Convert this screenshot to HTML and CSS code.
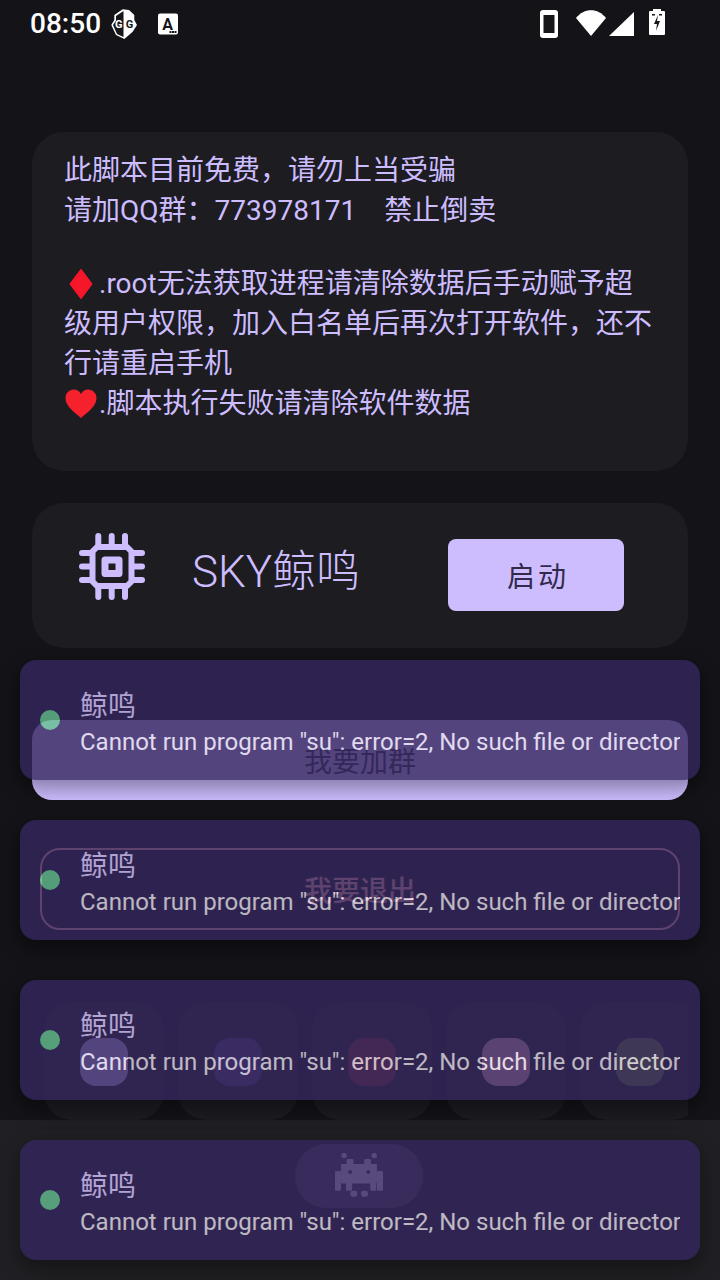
FILE: index.html
```html
<!DOCTYPE html>
<html lang="zh">
<head>
  <meta charset="UTF-8" />
  <meta name="viewport" content="width=device-width, initial-scale=1.0" />
  <title>SKY鲸鸣</title>
  <link rel="stylesheet" href="styles.css">
</head>
<body>

  <!-- Status bar -->
  <header class="status-bar">
    <div class="status-left">
      <span class="status-time">08:50</span>
      <svg class="status-icon gg-icon" width="26" height="48" viewBox="0 0 26 48">
        <path d="M11.700 9.300L18 10l5.300 5v5l2.700 5-4.300 6.700L18 35l-4.700 4L5 35 .3 25l3-5v-5z" fill="#fff"/>
        <path d="M12.500 11L5 16v4.500L2 25l4 9 6.500 3z" fill="#16161b"/>
        <text class="gg-letter" x="7.800" y="28" fill="#fff">G</text>
        <text class="gg-letter" x="18.500" y="28" fill="#16161b">G</text>
      </svg>
      <svg class="status-icon a-icon" width="20" height="48" viewBox="0 0 20 48">
        <rect x="0" y="13.500" width="20" height="21" rx="2" fill="#fff"/>
        <text class="a-letter" x="9.500" y="30" fill="#16161b">A</text>
        <rect x="11.500" y="31" width="2" height="2" fill="#16161b"/>
        <rect x="14" y="31" width="2" height="2" fill="#16161b"/>
        <rect x="16.500" y="31" width="2" height="2" fill="#16161b"/>
      </svg>
    </div>
    <div class="status-right">
      <svg width="18" height="48" viewBox="0 0 18 48">
        <rect x="0" y="10" width="18" height="28" rx="3" fill="#fff"/>
        <rect x="3.500" y="15" width="11" height="18" fill="#16161b"/>
      </svg>
      <svg class="wifi-icon" width="30" height="48" viewBox="0 0 30 48">
        <path d="M0 18C8 7.500 22 7.500 30 18L15 36z" fill="#fff"/>
      </svg>
      <svg class="signal-icon" width="25" height="48" viewBox="0 0 25 48">
        <path d="M25 12V36H0z" fill="#fff"/>
      </svg>
      <svg class="battery-icon" width="16" height="48" viewBox="0 0 16 48">
        <path d="M4 9h8v2h3a1 1 0 0 1 1 1v22a1 1 0 0 1-1 1H1a1 1 0 0 1-1-1V12a1 1 0 0 1 1-1h3z" fill="#fff"/>
        <path d="M3 14h3v1.500H3zM10 14h3v1.500h-3z" fill="#16161b"/>
        <path d="M9 15l-4 9h3l-1 7 4-10H8z" fill="#16161b"/>
      </svg>
    </div>
  </header>

  <main class="content">
    <!-- Notice -->
    <section class="card notice">
      此脚本目前免费，请勿上当受骗<br>
      请加QQ群：773978171　禁止倒卖<br>
      <br>
      <svg class="emoji" width="35" height="32" viewBox="0 0 34 32"><path d="M16.500 2L27 16 16.500 30 6 16z" fill="#f5162a" stroke="#f5162a" stroke-width="2" stroke-linejoin="round"/></svg>.root无法获取进程请清除数据后手动赋予超级用户权限，加入白名单后再次打开软件，还不行请重启手机<br>
      <svg class="emoji" width="35" height="32" viewBox="0 0 34 32"><path d="M16.500 30C9 23.500 1 18 1 10 1 5 5 1.500 9.500 1.500c3 0 5.500 1.500 7 4.500 1.500-3 4-4.500 7-4.500C28 1.500 32 5 32 10c0 8-8 13.500-15.500 20z" fill="#f5222d"/></svg>.脚本执行失败请清除软件数据
    </section>

    <!-- Module -->
    <section class="card module">
      <svg class="chip" width="66" height="67" viewBox="0 0 66 67" fill="none" stroke="#cdbdff" stroke-linecap="round">
        <path d="M19.300 3v9M32.700 3v9M46 3v9M19.300 55v9M32.700 55v9M46 55v9M3 20h9M3 33.500h9M3 47h9M54 20h9M54 33.500h9M54 47h9" stroke-width="6"/>
        <path d="M18 14h30l4.500 4.500v30L48 53H18l-4.500-4.500v-30z" stroke-width="6" stroke-linejoin="round"/>
        <path d="M26 27h14v13.500H26z" stroke-width="7" stroke-linejoin="round"/>
      </svg>
      <h1 class="module-title">SKY鲸鸣</h1>
      <button class="start-btn">启动</button>
    </section>

    <button class="wide-btn join-btn">我要加群</button>
    <button class="wide-btn quit-btn">我要退出</button>

    <!-- Shortcuts, scrolled past the right edge -->
    <div class="tiles">
      <div class="tile"><span class="tile-icon tile-primary"></span></div>
      <div class="tile"><span class="tile-icon tile-violet"></span></div>
      <div class="tile"><span class="tile-icon tile-red"></span></div>
      <div class="tile"><span class="tile-icon tile-pink"></span></div>
      <div class="tile"><span class="tile-icon tile-olive"></span></div>
    </div>
  </main>

  <!-- Bottom navigation -->
  <nav class="bottom-nav">
    <div class="nav-pill">
      <svg class="nav-icon" width="48" height="44" viewBox="0 0 143 130" fill="#e8def8">
        <circle cx="27" cy="7" r="8"/>
        <circle cx="117" cy="7" r="8"/>
        <rect x="35" y="17" width="20" height="20" rx="4"/>
        <rect x="87" y="17" width="20" height="20" rx="4"/>
        <rect x="18" y="32" width="107" height="58" rx="4"/>
        <rect x="0" y="53" width="18" height="59" rx="4"/>
        <rect x="125" y="53" width="18" height="59" rx="4"/>
        <rect x="33" y="85" width="18" height="27" rx="4"/>
        <rect x="105" y="85" width="18" height="27" rx="4"/>
        <rect x="46" y="112" width="20" height="18" rx="6"/>
        <rect x="78" y="112" width="20" height="18" rx="6"/>
        <circle cx="45" cy="56" r="6" fill="#4a4458"/>
        <circle cx="99" cy="56" r="6" fill="#4a4458"/>
      </svg>
    </div>
  </nav>

  <!-- Toasts over the page -->
  <div class="toasts">
    <div class="toast">
      <span class="toast-dot"></span>
      <div class="toast-text">
        <div class="toast-title">鲸鸣</div>
        <div class="toast-body">Cannot run program "su": error=2, No such file or directory</div>
      </div>
    </div>
    <div class="toast">
      <span class="toast-dot"></span>
      <div class="toast-text">
        <div class="toast-title">鲸鸣</div>
        <div class="toast-body">Cannot run program "su": error=2, No such file or directory</div>
      </div>
    </div>
    <div class="toast">
      <span class="toast-dot"></span>
      <div class="toast-text">
        <div class="toast-title">鲸鸣</div>
        <div class="toast-body">Cannot run program "su": error=2, No such file or directory</div>
      </div>
    </div>
    <div class="toast">
      <span class="toast-dot"></span>
      <div class="toast-text">
        <div class="toast-title">鲸鸣</div>
        <div class="toast-body">Cannot run program "su": error=2, No such file or directory</div>
      </div>
    </div>
  </div>

</body>
</html>
```

FILE: styles.css
```css
* {
  box-sizing: border-box;
}

html,
body {
  margin: 0;
  padding: 0;
}

body {
  position: relative;
  display: flex;
  flex-direction: column;
  width: 720px;
  height: 1280px;
  overflow: hidden;
  background-color: #131318;
  color: #cdbdff;
  font-family: Roboto, "Noto Sans CJK SC", sans-serif;
}

.status-bar {
  display: flex;
  justify-content: space-between;
  height: 48px;
  padding: 0 55px 0 30px;
}

.status-left,
.status-right {
  display: flex;
  align-items: center;
}

.status-time {
  color: #fff;
  font-size: 28px;
  font-weight: 500;
  line-height: 48px;
}

.gg-icon {
  margin-left: 10px;
}

.a-icon {
  margin-left: 21px;
}

.wifi-icon {
  margin-left: 18px;
}

.signal-icon {
  margin-left: 3px;
}

.battery-icon {
  margin-left: 15px;
}

.gg-letter {
  font-size: 11px;
  font-weight: 700;
  text-anchor: middle;
}

.a-letter {
  font-size: 16px;
  font-weight: 700;
  text-anchor: middle;
}

.content {
  display: flex;
  flex-direction: column;
  flex: 1;
  min-height: 0;
  padding: 84px 32px 0;
}

.card {
  background-color: #1c1c21;
  border-radius: 32px;
}

.notice {
  height: 339px;
  padding: 16px 32px;
  font-size: 28px;
}

.emoji {
  vertical-align: -7px;
}

.module {
  display: flex;
  align-items: center;
  height: 145px;
  margin-top: 32px;
  padding-left: 47px;
}

.chip {
  flex: none;
  margin-bottom: 19px;
}

.module-title {
  width: 256px;
  margin: 0 0 16px 47px;
  font-size: 44px;
  font-weight: 300;
}

.start-btn {
  width: 176px;
  height: 72px;
  margin-bottom: 2px;
  padding: 0 0 0 4px;
  border: none;
  border-radius: 8px;
  background-color: #cdbdff;
  color: #32294c;
  font-family: inherit;
  font-size: 28px;
  letter-spacing: 3px;
}

.wide-btn {
  flex: none;
  border-radius: 20px;
  font-family: inherit;
  font-size: 28px;
}

.join-btn {
  height: 80px;
  margin-top: 72px;
  border: none;
  background-color: #cdbdff;
  color: #32294c;
}

.quit-btn {
  height: 82px;
  margin: 48px 8px 0;
  border: 2px solid #ffb4ab;
  background: none;
  color: #ffb4ab;
  font-weight: 500;
}

.tiles {
  display: flex;
  gap: 14px;
  flex: none;
  height: 118px;
  margin-top: 72px;
  padding-left: 12px;
  overflow: hidden;
}

.tile {
  flex: 0 0 120px;
  padding: 36px;
  background-color: #1c1c21;
  border-radius: 28px;
}

.tile-icon {
  display: block;
  width: 48px;
  height: 48px;
  border-radius: 16px;
}

.tile-primary {
  background-color: #cdbdff;
}

.tile-violet {
  background-color: #4f3d78;
}

.tile-red {
  background-color: #7d2f33;
}

.tile-pink {
  background-color: #efb8c8;
}

.tile-olive {
  background-color: #6a7a3a;
}

.bottom-nav {
  display: flex;
  justify-content: center;
  flex: none;
  height: 160px;
  padding: 24px 2px 0 0;
  background-color: #201f23;
}

.nav-pill {
  display: flex;
  align-items: center;
  justify-content: center;
  width: 128px;
  height: 64px;
  border-radius: 32px;
  background-color: #4a4458;
}

.nav-icon {
  margin-bottom: 2px;
}

.toasts {
  position: absolute;
  top: 660px;
  left: 20px;
  right: 20px;
  display: flex;
  flex-direction: column;
  gap: 40px;
}

.toast {
  display: flex;
  align-items: center;
  gap: 20px;
  height: 120px;
  padding: 0 20px;
  border-radius: 16px;
  background-color: #35275e;
  box-shadow: 0 8px 20px rgba(0, 0, 0, 0.45);
  opacity: 0.8;
}

.toast-dot {
  flex: none;
  width: 20px;
  height: 20px;
  border-radius: 50%;
  background-color: #64c090;
}

.toast-text {
  flex: 1;
  min-width: 0;
}

.toast-title {
  margin-bottom: 4px;
  color: #d9c6ff;
  font-size: 28px;
}

.toast-body {
  overflow: hidden;
  color: #e7e0ec;
  font-size: 24px;
  white-space: nowrap;
}
```
